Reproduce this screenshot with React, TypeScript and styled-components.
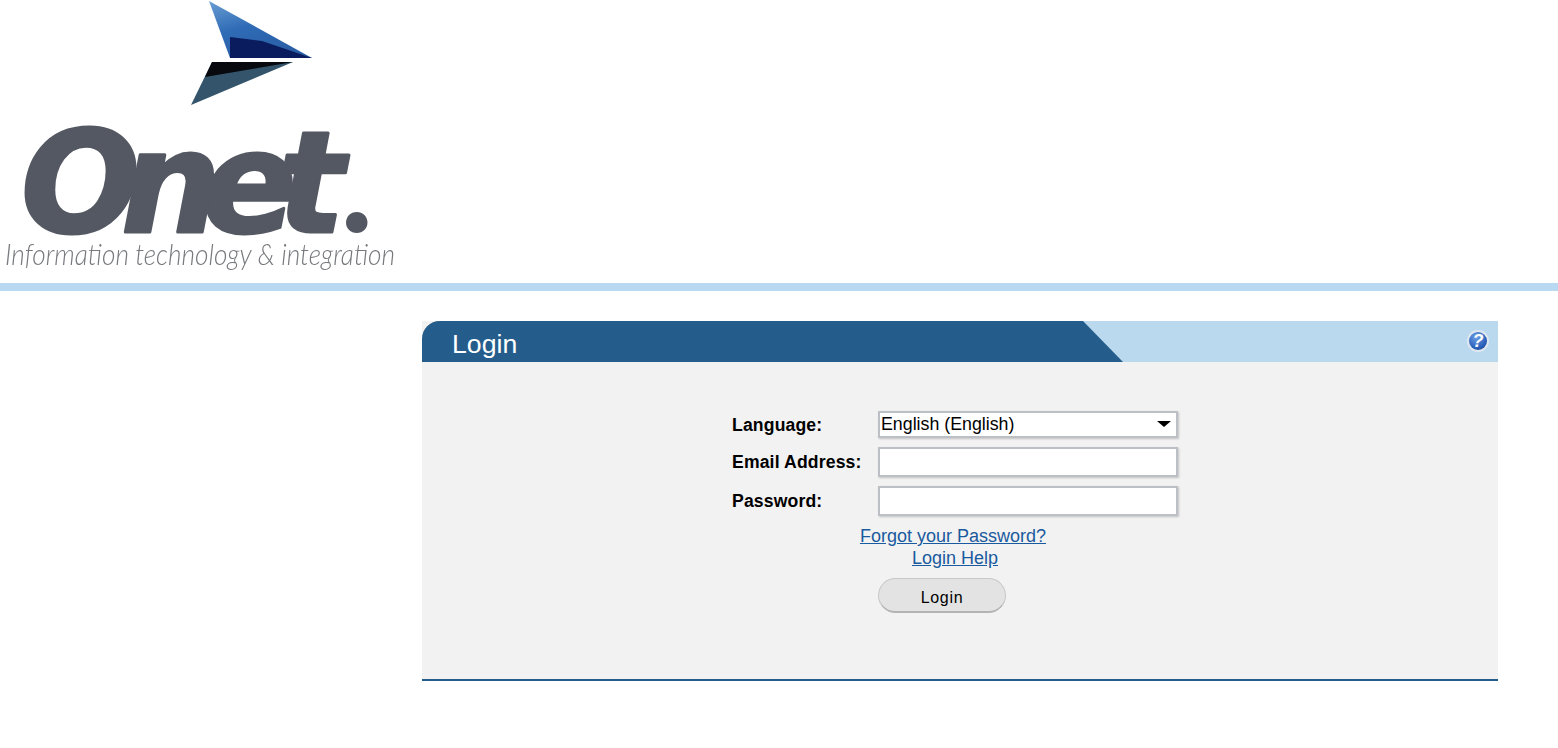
import React from 'react'
import styled, { createGlobalStyle } from 'styled-components'

const GlobalStyle = createGlobalStyle`
  html, body {
    margin: 0;
    padding: 0;
    background: #ffffff;
    font-family: "Liberation Sans", Arial, sans-serif;
    font-size: 16px;
    color: #000000;
  }
  * { box-sizing: border-box; }
`

const Header = styled.header`
  height: 291px;
  border-bottom: 8px solid #b8d9f1;
`

const LogoArt = styled.svg`
  display: block;
  width: 480px;
  height: 283px;
  filter: blur(0.5px);
`

const Main = styled.main`
  display: flex;
  justify-content: flex-end;
  padding: 30px 60px 0 0;
`

const Panel = styled.section`
  width: 1076px;
  height: 360px;
  display: flex;
  flex-direction: column;
  background: #f2f2f2;
  border-bottom: 2px solid #245d8b;
`

const TitleBar = styled.div`
  position: relative;
  height: 41px;
  display: flex;
  justify-content: space-between;
  background: #bad8ee;
  border-top-left-radius: 18px;
  overflow: hidden;

  &::before {
    content: "";
    position: absolute;
    top: 0;
    left: 0;
    width: 18px;
    height: 18px;
    border-top: 1px solid #d9a878;
    border-left: 1px solid #d9a878;
    border-top-left-radius: 18px;
  }
`

const TitleTab = styled.div`
  width: 701px;
  height: 100%;
  padding-left: 30px;
  background: #245d8b;
  clip-path: polygon(0 0, 661px 0, 701px 100%, 0 100%);
`

const Title = styled.h1`
  margin: 0;
  font-size: 26.67px;
  font-weight: 400;
  line-height: 46px;
  color: #ffffff;
`

const HelpButton = styled.a`
  display: block;
  width: 22px;
  height: 22px;
  margin: 9px 9px 0 0;
`

const HelpIcon = styled.svg`
  display: block;
  width: 22px;
  height: 22px;
`

const PanelBody = styled.div`
  flex: 1;
  padding: 49px 0 0 310px;
`

const LoginForm = styled.form`
  width: 446px;
  display: grid;
  grid-template-columns: 146px 300px;
  grid-auto-rows: auto;
  row-gap: 9px;
  align-items: center;
`

const FieldLabel = styled.label`
  font-weight: 700;
  font-size: 17.6px;
  letter-spacing: 0.15px;
  line-height: 20px;
`

const SelectWrap = styled.div`
  position: relative;
  height: 27px;

  &::after {
    content: "";
    position: absolute;
    top: 10px;
    right: 7px;
    border-style: solid;
    border-width: 6px 7px 0;
    border-color: #000000 transparent transparent;
    pointer-events: none;
  }
`

const LanguageSelect = styled.select`
  appearance: none;
  display: block;
  width: 100%;
  height: 100%;
  padding: 0 0 2px 1px;
  border: 2px solid #bcbfc3;
  border-radius: 0;
  background: #ffffff;
  box-shadow: 1px 1px 2px rgba(0, 0, 0, 0.2);
  font: 400 17.8px "Liberation Sans", Arial, sans-serif;
  color: #000000;
  outline: none;
`

const TextInput = styled.input`
  display: block;
  width: 100%;
  height: 30px;
  padding: 0 2px;
  border: 2px solid #bcbfc3;
  border-radius: 0;
  background: #ffffff;
  box-shadow: 1px 1px 2px rgba(0, 0, 0, 0.2);
  outline: none;
`

const HelpLinks = styled.div`
  grid-column: 1 / -1;
  display: flex;
  flex-direction: column;
  align-items: center;
`

const HelpLink = styled.a<{ $shift?: number }>`
  font-size: 18px;
  line-height: 22px;
  color: #1a5a9e;
  text-decoration: underline;
  margin-right: ${p => p.$shift ?? 0}px;
`

const SubmitButton = styled.button`
  grid-column: 2;
  width: 128px;
  height: 35px;
  padding: 6px 0 0;
  border: 1px solid #c8c8c8;
  border-bottom: 2px solid #b4b4b4;
  border-radius: 18px;
  background: #e3e3e3;
  font: 400 16px "Liberation Sans", Arial, sans-serif;
  letter-spacing: 0.7px;
  color: #000000;
`

const Logo = () => (
  <LogoArt viewBox="0 0 480 283" role="img" aria-label="Onet logo">
    <defs>
      <linearGradient id="wing" x1="0" y1="0" x2="0.5" y2="1">
        <stop offset="0" stopColor="#6a9ed2" />
        <stop offset="0.5" stopColor="#2f6bb6" />
        <stop offset="1" stopColor="#2a5fa5" />
      </linearGradient>
    </defs>
    <polygon points="209,1 312,58 230,58" fill="url(#wing)" />
    <polygon points="230,37 262,41 312,58 230,58" fill="#0a1c5e" />
    <polygon points="212,62 293,62 191,105" fill="#33546a" />
    <polygon points="212,62 293,62 205,77" fill="#07090e" />
    <text
      x="21"
      y="232"
      letterSpacing="-19"
      fontFamily="'DejaVu Sans', 'Liberation Sans', sans-serif"
      fontWeight="700"
      fontStyle="italic"
      fontSize="140"
      fill="#545862"
      stroke="#545862"
      strokeWidth="3"
      strokeLinejoin="round"
    >
      Onet
      <tspan dx="19" fontFamily="Lato, sans-serif" fontWeight="900" fontSize="132" strokeWidth="0">.</tspan>
    </text>
    <text
      x="5"
      y="265"
      textLength="390"
      lengthAdjust="spacingAndGlyphs"
      fontFamily="Lato, 'Liberation Sans', sans-serif"
      fontWeight="300"
      fontStyle="italic"
      fontSize="29"
      fill="#77797d"
    >
      Information technology &amp; integration
    </text>
  </LogoArt>
)

const Help = () => (
  <HelpIcon viewBox="0 0 22 22">
    <defs>
      <radialGradient id="ball" cx="0.4" cy="0.3" r="0.8">
        <stop offset="0" stopColor="#6f9fe6" />
        <stop offset="0.7" stopColor="#2b62bb" />
        <stop offset="1" stopColor="#1d4a97" />
      </radialGradient>
    </defs>
    <circle cx="11" cy="11" r="11" fill="#dfe8f0" />
    <circle cx="11" cy="11" r="9" fill="url(#ball)" />
    <text
      x="11"
      y="17"
      textAnchor="middle"
      fontFamily="'Liberation Sans', Arial, sans-serif"
      fontWeight="700"
      fontStyle="italic"
      fontSize="18"
      fill="#ffffff"
    >
      ?
    </text>
  </HelpIcon>
)

const App = () => {
  return (
    <>
      <GlobalStyle />
      <Header>
        <Logo />
      </Header>
      <Main>
        <Panel>
          <TitleBar>
            <TitleTab>
              <Title>Login</Title>
            </TitleTab>
            <HelpButton href="#">
              <Help />
            </HelpButton>
          </TitleBar>
          <PanelBody>
            <LoginForm onSubmit={e => e.preventDefault()}>
              <FieldLabel htmlFor="language">Language:</FieldLabel>
              <SelectWrap>
                <LanguageSelect id="language" defaultValue="en">
                  <option value="en">English (English)</option>
                </LanguageSelect>
              </SelectWrap>
              <FieldLabel htmlFor="email">Email Address:</FieldLabel>
              <TextInput id="email" type="text" />
              <FieldLabel htmlFor="password">Password:</FieldLabel>
              <TextInput id="password" type="password" />
              <HelpLinks>
                <HelpLink href="#" $shift={4}>Forgot your Password?</HelpLink>
                <HelpLink href="#">Login Help</HelpLink>
              </HelpLinks>
              <SubmitButton type="submit">Login</SubmitButton>
            </LoginForm>
          </PanelBody>
        </Panel>
      </Main>
    </>
  )
}

export default App
